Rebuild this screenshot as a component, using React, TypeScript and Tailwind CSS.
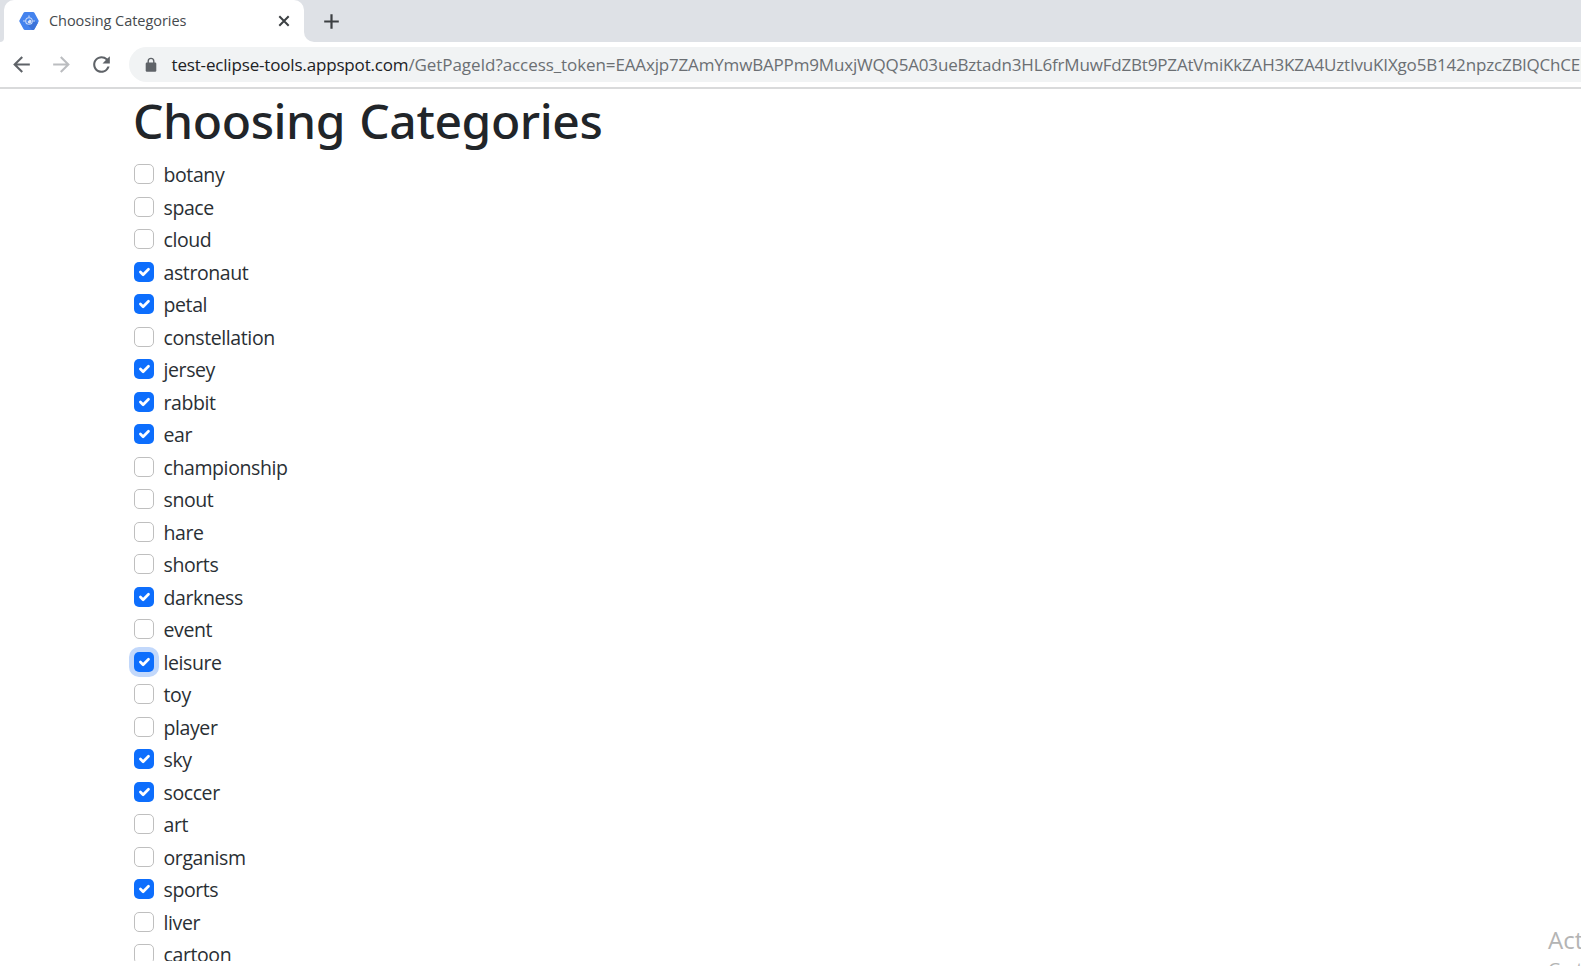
import { MdArrowBack, MdArrowForward, MdRefresh } from "react-icons/md";

type Category = { name: string; checked?: boolean; focused?: boolean };

const categories: Category[] = [
  { name: "botany" },
  { name: "space" },
  { name: "cloud" },
  { name: "astronaut", checked: true },
  { name: "petal", checked: true },
  { name: "constellation" },
  { name: "jersey", checked: true },
  { name: "rabbit", checked: true },
  { name: "ear", checked: true },
  { name: "championship" },
  { name: "snout" },
  { name: "hare" },
  { name: "shorts" },
  { name: "darkness", checked: true },
  { name: "event" },
  { name: "leisure", checked: true, focused: true },
  { name: "toy" },
  { name: "player" },
  { name: "sky", checked: true },
  { name: "soccer", checked: true },
  { name: "art" },
  { name: "organism" },
  { name: "sports", checked: true },
  { name: "liver" },
  { name: "cartoon" },
];

const token =
  "EAAxjp7ZAmYmwBAPPm9MuxjWQQ5A03ueBztadn3HL6frMuwFdZBt9PZAtVmiKkZAH3KZA4UztIvuKIXgo5B142npzcZBlQChCEI";

function Favicon() {
  return (
    <svg className="h-5 w-5 shrink-0" viewBox="0 0 20 20" fill="none">
      <path
        d="M5.9 1h8.2c.6 0 1 .3 1.3.8l4.1 7.4c.3.5.3 1.1 0 1.6l-4.1 7.4c-.3.5-.7.8-1.3.8H5.9c-.6 0-1-.3-1.3-.8L.5 10.8c-.3-.5-.3-1.1 0-1.6l4.1-7.4c.3-.5.7-.8 1.3-.8z"
        fill="#4483ee"
      />
      <path d="m12.5 7.500 6.300 4.600-3.400 6.100c-.3.5-.7.8-1.300.8H13l-5.500-6.500z" fill="#3b73d9" />
      <circle cx="10" cy="10" r="3.300" stroke="#c3d7f9" strokeWidth="1.100" />
      <path d="m8.500 10.800 2.300-2.300a2 2 0 1 1-2.300 2.300z" fill="#d5e3fb" />
      <path d="M10 4.500v2M4 10h2.500M13.500 10H16" stroke="#c3d7f9" strokeWidth="1.200" />
    </svg>
  );
}

function Lock() {
  return (
    <svg className="h-4 w-4 shrink-0" viewBox="0 0 16 16" fill="none">
      <rect x="2.7" y="5.6" width="10.6" height="9.2" rx="1.2" fill="#5f6368" />
      <path d="M5.2 6V4.200a2.800 2.800 0 0 1 5.600 0V6" stroke="#5f6368" strokeWidth="1.4" />
    </svg>
  );
}

function TabStrip() {
  return (
    <div className="flex h-[42px] shrink-0 bg-[#dee1e6]">
      <div className="flex w-1 items-end bg-white">
        <div className="h-full w-full rounded-br-[4px] bg-[#dee1e6]" />
      </div>
      <div className="flex h-full w-[300px] items-center rounded-t-[10px] bg-white pl-[15px] pr-[11px]">
        <Favicon />
        <span className="ml-[10px] flex-1 text-[14.5px] tracking-[-0.05px] text-[#45494d]">Choosing Categories</span>
        <svg className="h-[18px] w-[18px]" viewBox="0 0 18 18" fill="none">
          <path d="m4.300 4.300 9.400 9.400M13.700 4.300l-9.400 9.400" stroke="#3c4043" strokeWidth="2" />
        </svg>
      </div>
      <div className="flex h-full items-end">
        <div className="h-[10px] w-[10px] bg-white">
          <div className="h-full w-full rounded-bl-[10px] bg-[#dee1e6]" />
        </div>
      </div>
      <div className="flex items-center pl-[5px]">
        <svg className="h-[25px] w-[25px]" viewBox="0 0 25 25" fill="none">
          <path d="M12.500 5.200v14.600M5.200 12.500h14.600" stroke="#3c4043" strokeWidth="2.200" />
        </svg>
      </div>
    </div>
  );
}

function Toolbar() {
  return (
    <div className="flex h-[47px] shrink-0 items-start border-b-2 border-[#d9dadb] bg-white pl-[9px] pt-[5px]">
      <div className="flex h-[35px] w-[120px] shrink-0 items-center gap-[15px]">
        <MdArrowBack className="h-[25px] w-[25px] text-[#5f6368]" />
        <MdArrowForward className="h-[25px] w-[25px] text-[#bbbdc0]" />
        <MdRefresh className="h-[25px] w-[25px] text-[#5f6368]" />
      </div>
      <div className="flex h-[35px] min-w-0 flex-1 items-center overflow-hidden rounded-l-full bg-[#f1f3f4] pl-[14px]">
        <Lock />
        <div className="ml-[12.5px] flex whitespace-nowrap text-[17px] tracking-[-0.17px] text-[#6b6f73]">
          <span className="text-[#202124]">test-eclipse-tools.appspot.com</span>
          <span className="tracking-[-0.08px]">/GetPageId?access_token=</span>
          <span>{token}</span>
        </div>
      </div>
    </div>
  );
}

function Checkbox({ checked, focused }: { checked?: boolean; focused?: boolean }) {
  if (!checked) {
    return <span role="checkbox" aria-checked="false" className="h-5 w-5 rounded-[5px] border border-[#bfbfbf] bg-white" />;
  }
  return (
    <span
      role="checkbox"
      aria-checked="true"
      className={`h-5 w-5 rounded-[5px] bg-[#0d6efd] p-px ${focused ? "ring-[5px] ring-[#c2d8fb]" : ""}`}
    >
      <svg viewBox="0 0 20 20" className="h-[18px] w-[18px]" fill="none">
        <path d="m6 10 3 3 6-6" stroke="#fff" strokeWidth="3" strokeLinecap="round" strokeLinejoin="round" />
      </svg>
    </span>
  );
}

export default function App() {
  return (
    <div className="relative flex h-[966px] w-full flex-col overflow-hidden bg-white font-['Open_Sans',sans-serif]">
      <TabStrip />
      <Toolbar />
      <main className="h-[872px] shrink-0 overflow-hidden pl-[134px] pt-[2px] text-[#2a2f34]">
        <h1 className="-ml-[1px] mb-2 font-['Noto_Sans',sans-serif] text-[48px] font-medium leading-[60px] tracking-[-0.4px] text-[#212529] [word-spacing:2px]">
          Choosing Categories
        </h1>
        {categories.map((c) => (
          <div key={c.name} className="flex h-[32.5px] items-start gap-[9.5px]">
            <span className="flex pt-[5px]">
              <Checkbox checked={c.checked} focused={c.focused} />
            </span>
            <span className="pt-[1px] text-[19.5px] leading-[30px] tracking-[-0.4px]">{c.name}</span>
          </div>
        ))}
      </main>
      <div className="absolute left-[1548px] top-[922px] whitespace-nowrap text-[#b4b4b4]">
        <div className="text-[24px] leading-[36px]">Activate Windows</div>
        <div className="text-[18px] leading-[22px]">Go to Settings to activate Windows.</div>
      </div>
    </div>
  );
}
